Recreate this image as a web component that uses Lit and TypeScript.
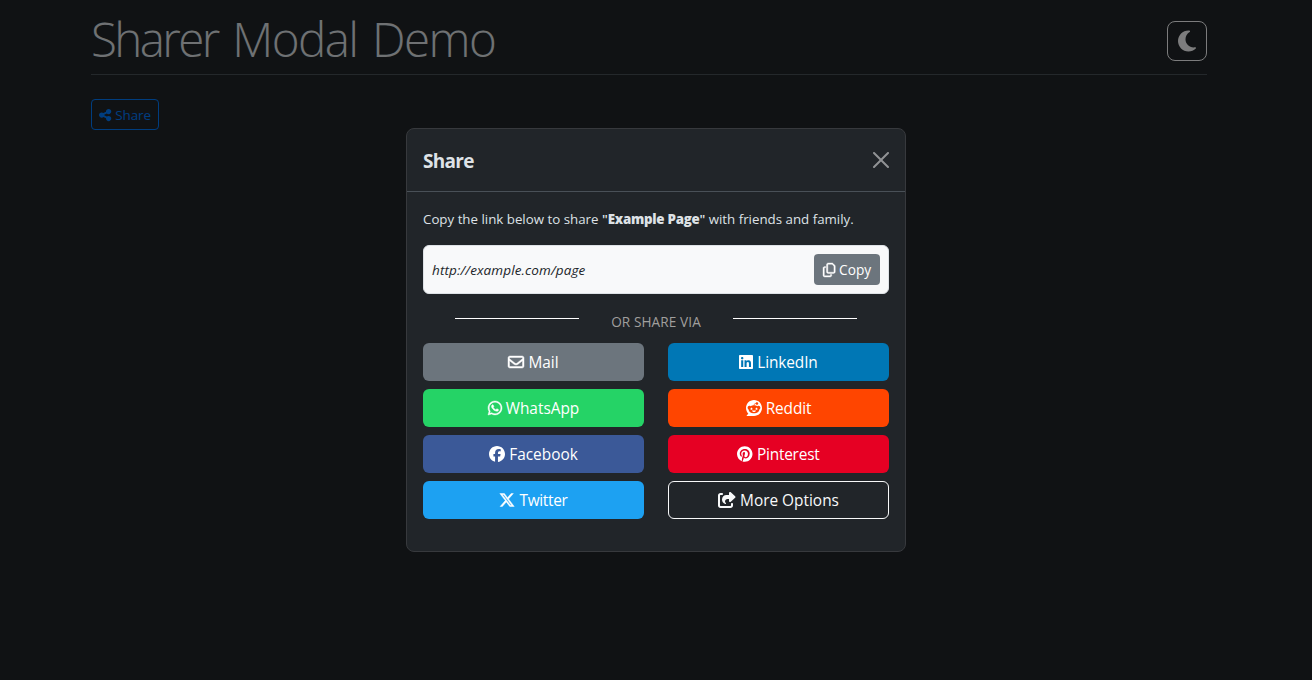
import { LitElement, html, css, svg } from "lit";
import { customElement, property } from "lit/decorators.js";

const icons: Record<string, [number, string]> = {
  share: [448, "M352 224c53 0 96-43 96-96s-43-96-96-96s-96 43-96 96c0 4 .2 8 .7 11.9l-94.1 47C145.4 170.2 121.9 160 96 160c-53 0-96 43-96 96s43 96 96 96c25.9 0 49.4-10.2 66.6-26.9l94.1 47c-.5 3.9-.7 7.8-.7 11.9c0 53 43 96 96 96s96-43 96-96s-43-96-96-96c-25.9 0-49.4 10.2-66.6 26.9l-94.1-47c.5-3.9 .7-7.8 .7-11.9s-.2-8-.7-11.9l94.1-47C302.6 213.8 326.1 224 352 224z"],
  moon: [384, "M223.5 32C100 32 0 132.3 0 256S100 480 223.5 480c60.6 0 115.5-24.2 155.8-63.4c5-4.9 6.3-12.5 3.1-18.7s-10.1-9.7-17-8.5c-9.8 1.7-19.8 2.6-30.1 2.6c-96.9 0-175.5-78.8-175.5-176c0-65.8 36-123.1 89.3-153.3c6.1-3.5 9.2-10.5 7.7-17.3s-7.3-11.9-14.3-12.5c-6.3-.5-12.6-.8-19-.8z"],
  copy: [448, "M384 336H192c-8.8 0-16-7.2-16-16V64c0-8.8 7.2-16 16-16l140.1 0L400 115.9V320c0 8.8-7.2 16-16 16zM192 384H384c35.3 0 64-28.7 64-64V115.9c0-12.7-5.1-24.9-14.1-33.9L366.1 14.1c-9-9-21.2-14.1-33.9-14.1H192c-35.3 0-64 28.7-64 64V320c0 35.3 28.7 64 64 64zM64 128c-35.3 0-64 28.7-64 64V448c0 35.3 28.7 64 64 64H256c35.3 0 64-28.7 64-64V416H272v32c0 8.8-7.2 16-16 16H64c-8.8 0-16-7.2-16-16V192c0-8.8 7.2-16 16-16H96V128H64z"],
  mail: [512, "M64 112c-8.8 0-16 7.2-16 16v22.1L220.5 291.7c20.7 17 50.4 17 71.1 0L464 150.1V128c0-8.8-7.2-16-16-16H64zM48 212.2V384c0 8.8 7.2 16 16 16H448c8.8 0 16-7.2 16-16V212.2L322 328.8c-38.4 31.5-93.7 31.5-132 0L48 212.2zM0 128C0 92.7 28.7 64 64 64H448c35.3 0 64 28.7 64 64V384c0 35.3-28.7 64-64 64H64c-35.3 0-64-28.7-64-64V128z"],
  linkedin: [448, "M416 32H31.9C14.3 32 0 46.5 0 64.3v383.4C0 465.5 14.3 480 31.9 480H416c17.6 0 32-14.5 32-32.3V64.3c0-17.8-14.4-32.3-32-32.3zM135.4 416H69V202.2h66.5V416zm-33.2-243c-21.3 0-38.5-17.3-38.5-38.5S80.9 96 102.2 96c21.2 0 38.5 17.3 38.5 38.5 0 21.3-17.2 38.5-38.5 38.5zm282.1 243h-66.4V312c0-24.8-.5-56.7-34.5-56.7-34.6 0-39.9 27-39.9 54.9V416h-66.4V202.2h63.7v29.2h.9c8.9-16.8 30.6-34.5 62.9-34.5 67.2 0 79.7 44.3 79.7 101.9V416z"],
  whatsapp: [448, "M380.9 97.1C339 55.1 283.2 32 223.9 32c-122.4 0-222 99.6-222 222 0 39.1 10.2 77.3 29.6 111L0 480l117.7-30.9c32.4 17.7 68.9 27 106.1 27h.1c122.3 0 224.1-99.6 224.1-222 0-59.3-25.2-115-67.1-157zm-157 341.6c-33.2 0-65.7-8.9-94-25.7l-6.7-4-69.8 18.3L72 359.2l-4.4-7c-18.5-29.4-28.2-63.3-28.2-98.2 0-101.7 82.8-184.5 184.6-184.5 49.3 0 95.6 19.2 130.4 54.1 34.8 34.9 56.2 81.2 56.1 130.5 0 101.8-84.9 184.6-186.6 184.6zm101.2-138.2c-5.5-2.8-32.8-16.2-37.9-18-5.1-1.9-8.8-2.8-12.5 2.8-3.7 5.6-14.3 18-17.6 21.8-3.2 3.7-6.5 4.2-12 1.4-32.6-16.3-54-29.1-75.5-66-5.7-9.8 5.7-9.1 16.3-30.3 1.8-3.7.9-6.9-.5-9.7-1.4-2.8-12.5-30.1-17.1-41.2-4.5-10.8-9.1-9.3-12.5-9.5-3.2-.2-6.9-.2-10.6-.2-3.7 0-9.7 1.4-14.8 6.9-5.1 5.6-19.4 19-19.4 46.3 0 27.3 19.9 53.7 22.6 57.4 2.8 3.7 39.1 59.7 94.8 83.8 35.2 15.2 49 16.5 66.6 13.9 10.7-1.6 32.8-13.4 37.4-26.4 4.6-13 4.6-24.1 3.2-26.4-1.3-2.5-5-3.9-10.5-6.6z"],
  facebook: [512, "M512 256C512 114.6 397.4 0 256 0S0 114.6 0 256C0 376 82.7 476.8 194.2 504.5V334.2H141.4V256h52.8V222.3c0-87.1 39.4-127.5 125-127.5c16.2 0 44.2 3.2 55.7 6.4V172c-6-.6-16.5-1-29.6-1c-42 0-58.2 15.9-58.2 57.2V256h83.6l-14.4 78.2H287V510.1C413.8 494.8 512 386.9 512 256h0z"],
  twitter: [512, "M389.2 48h70.6L305.6 224.2 487 464H345L233.7 318.6 106.5 464H35.8L200.7 275.5 26.8 48H172.4L272.9 180.9 389.2 48zM364.4 421.8h39.1L151.1 88h-42L364.4 421.8z"],
  pinterest: [496, "M496 256c0 137-111 248-248 248-25.6 0-50.2-3.9-73.4-11.1 10.1-16.5 25.2-43.5 30.8-65 3-11.6 15.4-59 15.4-59 8.1 15.4 31.7 28.5 56.8 28.5 74.8 0 128.7-68.8 128.7-154.3 0-81.9-66.9-143.2-152.9-143.2-107 0-163.9 71.8-163.9 150.1 0 36.4 19.4 81.7 50.3 96.1 4.7 2.2 7.2 1.2 8.3-3.3.8-3.4 5-20.3 6.9-28.1.6-2.5.3-4.7-1.7-7.1-10.1-12.5-18.3-35.3-18.3-56.6 0-54.7 41.4-107.6 112-107.6 60.9 0 103.6 41.5 103.6 100.9 0 67.1-33.9 113.6-78 113.6-24.3 0-42.6-20.1-36.7-44.8 7-29.5 20.5-61.3 20.5-82.6 0-19-10.2-34.9-31.4-34.9-24.9 0-44.9 25.7-44.9 60.2 0 22 7.4 36.8 7.4 36.8s-24.5 103.8-29 123.2c-5 21.4-3 51.6-.9 71.2C65.4 450.9 0 361.1 0 256 0 119 111 8 248 8s248 111 248 248z"],
  reddit: [512, "M0 256C0 114.6 114.6 0 256 0S512 114.6 512 256s-114.6 256-256 256L37.1 512c-13.7 0-20.5-16.5-10.9-26.2L75 437C28.7 390.7 0 326.7 0 256zM349.6 153.6c23.6 0 42.7-19.1 42.7-42.7s-19.1-42.7-42.7-42.7c-20.6 0-37.8 14.6-41.8 34c-34.5 3.7-61.4 33-61.4 68.4l0 .2c-37.5 1.6-71.8 12.3-99 29.1c-10.1-7.8-22.8-12.5-36.5-12.5c-33 0-59.8 26.8-59.8 59.8c0 24 14.1 44.6 34.4 54.1c2 69.4 77.6 125.2 170.6 125.2s168.7-55.9 170.6-125.3c20.2-9.6 34.1-30.2 34.1-54c0-33-26.8-59.8-59.8-59.8c-13.7 0-26.3 4.6-36.4 12.4c-27.4-17-62.1-27.7-100-29.1l0-.2c0-25.4 18.9-46.5 43.4-49.9l0 0c4.4 18.8 21.3 32.8 41.5 32.8zM177.1 246.9c16.7 0 29.5 17.6 28.5 39.3s-13.5 29.6-30.3 29.6s-31.4-8.8-30.4-30.5s15.4-38.3 32.1-38.3zm190.1 38.3c1 21.7-13.7 30.5-30.4 30.5s-29.3-7.9-30.3-29.6c-1-21.7 11.8-39.3 28.5-39.3s31.2 16.6 32.1 38.3zm-48.1 56.7c-10.3 24.6-34.6 41.9-63 41.9s-52.7-17.3-63-41.9c-1.2-2.9 .8-6.2 3.9-6.5c18.4-1.9 38.3-2.9 59.1-2.9s40.7 1 59.1 2.9c3.1 .3 5.1 3.6 3.9 6.5z"],
  more: [576, "M352 224H305.5c-45 0-81.5 36.5-81.5 81.5c0 22.3 10.3 34.3 19.2 40.5c6.8 4.7 12.8 12 12.8 20.3c0 9.8-8 17.8-17.8 17.8h-2.5c-2.4 0-4.8-.4-7.1-1.4C210.8 374.8 128 333.4 128 240c0-79.5 64.5-144 144-144h80V34.7C352 15.5 367.5 0 386.7 0c8.6 0 16.8 3.2 23.2 8.9L548.1 133.3c7.6 6.8 11.9 16.5 11.9 26.7s-4.3 19.9-11.9 26.7l-139 125.1c-5.9 5.3-13.5 8.2-21.4 8.2H384c-17.7 0-32-14.3-32-32V224zM80 96c-8.8 0-16 7.2-16 16V432c0 8.8 7.2 16 16 16H400c8.8 0 16-7.2 16-16V384c0-17.7 14.3-32 32-32s32 14.3 32 32v48c0 44.2-35.8 80-80 80H80c-44.2 0-80-35.8-80-80V112C0 67.8 35.8 32 80 32h48c17.7 0 32 14.3 32 32s-14.3 32-32 32H80z"],
};

@customElement("fa-icon")
export class FaIcon extends LitElement {
  @property() name = "share";
  static styles = css`
    :host { display: inline-flex; flex: none; }
    svg { display: block; height: 1em; fill: currentColor; overflow: visible; }
    .copy, .mail, .whatsapp, .twitter { stroke: currentColor; stroke-width: 14; }
  `;
  render() {
    const [w, d] = icons[this.name];
    return html`<svg class=${this.name} viewBox="0 0 ${w} 512">${svg`<path d=${d}></path>`}</svg>`;
  }
}

const targets = [
  ["mail", "Mail"],
  ["linkedin", "LinkedIn"],
  ["whatsapp", "WhatsApp"],
  ["reddit", "Reddit"],
  ["facebook", "Facebook"],
  ["pinterest", "Pinterest"],
  ["twitter", "Twitter"],
  ["more", "More Options"],
];

@customElement("app-root")
export class AppRoot extends LitElement {
  static styles = css`
    * { box-sizing: border-box; }
    :host {
      display: block; position: relative; height: 680px; overflow: hidden;
      background: #212529; color: #dee2e6;
      font: 400 15.4px/24px "Segoe UI", "Open Sans", "Noto Sans", sans-serif;
    }
    h1, h5, p, hr { margin: 0; }
    button { font: inherit; display: flex; align-items: center; justify-content: center; padding: 0; background: none; }
    .page { width: 1116px; margin-left: 91px; }
    .top { display: flex; justify-content: space-between; align-items: flex-start; height: 75px; border-bottom: 1px solid #495057; }
    h1 { font-size: 47.5px; line-height: 58px; font-weight: 300; padding-top: 10px; letter-spacing: -1.6px; word-spacing: 4px; }
    .tight { letter-spacing: -2.6px; }
    .theme { width: 40px; height: 40px; margin-top: 21px; border: 1px solid #f8f9fa; border-radius: 8px; color: #f8f9fa; font-size: 24px; }
    .open { margin-top: 24px; width: 68px; height: 31px; border: 1px solid #007bff; border-radius: 4px; color: #007bff; font-size: 13.5px; letter-spacing: -0.1px; gap: 4px; }
    .open fa-icon { font-size: 14px; }
    .backdrop { position: absolute; inset: 0; background: rgba(0, 0, 0, 0.5); display: flex; align-items: center; justify-content: center; }
    .modal { width: 500px; height: 424px; background: #212529; border: 1px solid #37393d; border-radius: 8px; }
    .head { height: 63px; padding: 0 16px; display: flex; align-items: center; justify-content: space-between; border-bottom: 1px solid #495057; }
    h5 { font-size: 19px; font-weight: 700; line-height: 30px; padding-top: 2px; letter-spacing: -0.7px; }
    .close { width: 16px; height: 16px; opacity: 0.5; fill: #fff; }
    .body { padding: 16px; }
    .lead { font-size: 13.3px; line-height: 21px; padding-top: 1px; height: 21px; white-space: nowrap; }
    .lead b { font-weight: 600; }
    .lead strong { font-weight: 800; letter-spacing: -0.25px; }
    .link { margin-top: 16px; height: 49px; padding: 0 8px; display: flex; align-items: center; justify-content: space-between; background: #f8f9fa; border: 1px solid #dee2e6; border-radius: 6px; color: #212529; }
    .url { font-size: 13.5px; font-style: italic; letter-spacing: 0.12px; }
    .copy { width: 66px; height: 31px; background: #6c757d; color: #fff; border: 0; border-radius: 4px; font-size: 13.7px; gap: 4px; }
    .copy fa-icon { font-size: 14px; }
    .via { height: 49px; padding: 0 32px; display: grid; grid-template-columns: 124px 1fr 124px; }
    hr { height: 1px; border: 0; background: #fff; margin-top: 24px; }
    .via span { text-align: center; font-size: 13.6px; letter-spacing: 0.1px; line-height: 21px; margin-top: 17px; color: #a09f9d; white-space: nowrap; }
    .grid { display: grid; grid-template-columns: 221px 221px; column-gap: 24px; row-gap: 8px; }
    .grid button { height: 38px; border-radius: 6px; border: 0; color: #fff; gap: 4px; white-space: nowrap; }
    .grid span { padding-top: 2px; }
    .grid fa-icon { font-size: 16px; }
    .grid .mail { background: #6c757d; }
    .grid .linkedin { background: #0077b5; }
    .grid .whatsapp { background: #25d366; }
    .grid .reddit { background: #ff4500; }
    .grid .facebook { background: #3b5998; }
    .grid .pinterest { background: #e60023; letter-spacing: -0.2px; }
    .grid .twitter { background: #1da1f2; letter-spacing: -0.3px; }
    .grid .linkedin, .grid .reddit { letter-spacing: -0.1px; }
    .grid .more { border: 1px solid #f8f9fa; color: #f8f9fa; }
  `;

  render() {
    return html`
      <div class="page">
        <div class="top">
          <h1><span class="tight">Sharer</span> Modal Demo</h1>
          <button class="theme"><fa-icon name="moon"></fa-icon></button>
        </div>
        <button class="open"><fa-icon name="share"></fa-icon><span>Share</span></button>
      </div>
      <div class="backdrop">
        <div class="modal">
          <div class="head">
            <h5>Share</h5>
            <svg class="close" viewBox="0 0 16 16"><path d="M.293.293a1 1 0 0 1 1.414 0L8 6.586 14.293.293a1 1 0 1 1 1.414 1.414L9.414 8l6.293 6.293a1 1 0 0 1-1.414 1.414L8 9.414l-6.293 6.293a1 1 0 0 1-1.414-1.414L6.586 8 .293 1.707a1 1 0 0 1 0-1.414z"></path></svg>
          </div>
          <div class="body">
            <p class="lead">Copy the link below to share <b>"<strong>Example Page</strong>"</b> with friends and family.</p>
            <div class="link">
              <span class="url">http://example.com/page</span>
              <button class="copy"><fa-icon name="copy"></fa-icon><span>Copy</span></button>
            </div>
            <div class="via"><hr /><span>OR SHARE VIA</span><hr /></div>
            <div class="grid">
              ${targets.map(([k, t]) => html`<button class=${k}><fa-icon name=${k}></fa-icon><span>${t}</span></button>`)}
            </div>
          </div>
        </div>
      </div>
    `;
  }
}
